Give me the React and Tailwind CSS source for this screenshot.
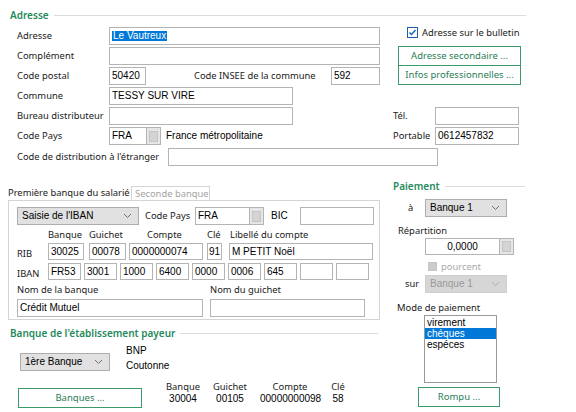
import React from 'react'

const label = "font-['Noto_Sans',sans-serif] text-[9.4px] text-[#1a1a1a] leading-none whitespace-nowrap"
const value = "font-['Liberation_Sans',Arial,sans-serif] text-[10px] text-black whitespace-nowrap"

function Field({ w, h = 18, children, center, className = '' }) {
  return (
    <div
      className={`shrink-0 border border-[#b4b4b4] bg-white flex items-center px-[2px] leading-none ${center ? 'justify-center' : ''} ${value} ${className}`}
      style={{ width: w, height: h }}
    >
      {children}
    </div>
  )
}

function DotsBtn({ h = 18 }) {
  return (
    <div className="shrink-0 w-[14px] border border-[#b4b4b4] border-l-0 bg-[#e6e6e6] flex items-center justify-center" style={{ height: h }}>
      <div className="w-[9px] h-[11px] bg-[#d4d4d4] border border-[#c4c4c4]" />
    </div>
  )
}

function Chevron({ color = '#707070' }) {
  return (
    <svg width="9" height="6" viewBox="0 0 9 6" className="shrink-0">
      <path d="M1 1l3.5 3.5L8 1" fill="none" stroke={color} strokeWidth="1" />
    </svg>
  )
}

function Select({ w, children, disabled }) {
  return (
    <div
      className={`shrink-0 h-[18px] border flex items-center justify-between pl-[4px] pr-[6px] ${disabled ? 'bg-[#d6d6d6] border-[#cfcfcf] text-[#9a9a9a]' : 'bg-[#e1e1e1] border-[#adadad] text-black'} font-['Liberation_Sans',Arial,sans-serif] text-[10px] leading-none whitespace-nowrap`}
      style={{ width: w }}
    >
      <span>{children}</span>
      <Chevron color={disabled ? '#b0b0b0' : '#707070'} />
    </div>
  )
}

function GreenBtn({ w, children, className = '' }) {
  return (
    <div
      className={`shrink-0 h-[20px] border border-[#3a9a6c] bg-white flex items-center justify-center text-[#2b7d57] font-['Noto_Sans',sans-serif] text-[9.5px] leading-none whitespace-nowrap ${className}`}
      style={{ width: w }}
    >
      {children}
    </div>
  )
}

function GroupHeader({ title, className = '' }) {
  return (
    <div className={`flex items-center h-[14px] ${className}`}>
      <span className="font-['Noto_Sans',sans-serif] text-[10px] font-semibold text-[#1f8a5c] leading-none whitespace-nowrap">{title}</span>
      <div className="flex-1 h-px bg-[#dcdcdc] ml-[5px]" />
    </div>
  )
}

function Row({ children, className = '' }) {
  return <div className={`flex items-center h-[18px] ${className}`}>{children}</div>
}

export default function App() {
  return (
    <div className="w-[576px] h-[412px] bg-white overflow-hidden">
      {/* Adresse */}
      <GroupHeader title="Adresse" className="mt-[8px] ml-[10px] w-[516px]" />

      <div className="flex mt-[5px]">
        <div className="ml-[17px] w-[363px] flex flex-col gap-[2px]">
          <Row>
            <span className={`${label} w-[92px]`}>Adresse</span>
            <Field w={271}>
              <span className="bg-[#0078d7] text-white px-px">Le Vautreux</span>
            </Field>
          </Row>
          <Row>
            <span className={`${label} w-[92px]`}>Complément</span>
            <Field w={271} />
          </Row>
          <Row>
            <span className={`${label} w-[92px]`}>Code postal</span>
            <Field w={37}>50420</Field>
            <span className={`${label} w-[137px] ml-[48px]`}>Code INSEE de la commune</span>
            <Field w={49}>592</Field>
          </Row>
          <Row>
            <span className={`${label} w-[92px]`}>Commune</span>
            <Field w={184}>TESSY SUR VIRE</Field>
          </Row>
          <Row>
            <span className={`${label} w-[92px]`}>Bureau distributeur</span>
            <Field w={184} />
          </Row>
          <Row>
            <span className={`${label} w-[92px]`}>Code Pays</span>
            <Field w={38}>FRA</Field>
            <DotsBtn />
            <span className={`${value} leading-none ml-[5px]`}>France métropolitaine</span>
          </Row>
        </div>

        <div className="ml-[13px] w-[128px] flex flex-col">
          <div className="flex items-center h-[11px] ml-[14px]">
            <div className="w-[11px] h-[11px] border border-[#1f5fa8] bg-white flex items-center justify-center">
              <svg width="9" height="9" viewBox="0 0 9 9">
                <path d="M1.5 4.5l2 2L7.5 2" fill="none" stroke="#0067c0" strokeWidth="1.4" />
              </svg>
            </div>
            <span className={`${label} ml-[4px]`}>Adresse sur le bulletin</span>
          </div>
          <GreenBtn w={123} className="ml-[5px] mt-[8px]">Adresse secondaire ...</GreenBtn>
          <GreenBtn w={123} className="ml-[5px] -mt-px">Infos professionnelles ...</GreenBtn>
          <Row className="mt-[22px]">
            <span className={`${label} w-[42px]`}>Tél.</span>
            <Field w={84} />
          </Row>
          <Row className="mt-[2px]">
            <span className={`${label} w-[42px]`}>Portable</span>
            <Field w={84}>0612457832</Field>
          </Row>
        </div>
      </div>

      <Row className="ml-[17px] mt-[3px]">
        <span className={`${label} w-[151px]`}>Code de distribution à l'étranger</span>
        <Field w={270} />
      </Row>

      {/* bottom area */}
      <div className="flex mt-[13px]">
        <div className="ml-[8px] w-[372px] flex flex-col">
          {/* tabs */}
          <div className="flex items-end h-[14px] mt-[7px]">
            <div className={`${label} h-[14px] flex items-center w-[122px]`}>Première banque du salarié</div>
            <div className="h-[14px] flex items-center px-[3px] ml-[1px] border border-b-0 border-[#d4d4d4] font-['Noto_Sans',sans-serif] text-[9.4px] text-[#a3a3a3] leading-none whitespace-nowrap w-[79px]">
              Seconde banque
            </div>
          </div>
          <div className="border border-[#d4d4d4] h-[120px] pl-[8px] pt-[6px] flex flex-col">
            <Row>
              <Select w={122}>Saisie de l'IBAN</Select>
              <span className={`${label} ml-[6px] w-[50px]`}>Code Pays</span>
              <Field w={55}>FRA</Field>
              <DotsBtn />
              <span className={`${value} leading-none ml-[7px] w-[29px]`}>BIC</span>
              <Field w={74} />
            </Row>
            <div className={`flex items-center h-[12px] mt-[4px] ${label}`}>
              <span className="ml-[31px] w-[41px]">Banque</span>
              <span className="w-[58px]">Guichet</span>
              <span className="w-[60px]">Compte</span>
              <span className="w-[23px]">Clé</span>
              <span>Libellé du compte</span>
            </div>
            <div className="flex items-end h-[17px] mt-[2px]">
              <span className={`${label} w-[31px] mb-[2px]`}>RIB</span>
              <Field w={36} h={17}>30025</Field>
              <Field w={37} h={17} className="ml-[5px]">00078</Field>
              <Field w={74} h={17} className="ml-[3px]">0000000074</Field>
              <Field w={15} h={17} className="ml-[4px]" center>91</Field>
              <Field w={144} h={17} className="ml-[7px]">M PETIT Noël</Field>
            </div>
            <div className="flex items-end h-[17px] mt-[3px] gap-[3px]">
              <span className={`${label} w-[28px] mb-[2px]`}>IBAN</span>
              <Field w={33} h={17}>FR53</Field>
              <Field w={33} h={17}>3001</Field>
              <Field w={33} h={17}>1000</Field>
              <Field w={33} h={17}>6400</Field>
              <Field w={33} h={17}>0000</Field>
              <Field w={33} h={17}>0006</Field>
              <Field w={33} h={17}>645</Field>
              <Field w={33} h={17} />
              <Field w={33} h={17} />
            </div>
            <div className={`flex items-center h-[12px] mt-[4px] ${label}`}>
              <span className="w-[193px]">Nom de la banque</span>
              <span>Nom du guichet</span>
            </div>
            <div className="flex items-center mt-[3px]">
              <Field w={186}>Crédit Mutuel</Field>
              <Field w={155} className="ml-[7px]" />
            </div>
          </div>

          <GroupHeader title="Banque de l'établissement payeur" className="mt-[6px] ml-[2px] w-[368px]" />

          <div className="flex mt-[3px] ml-[12px]">
            <div className="mt-[10px]">
              <Select w={90}>1ère Banque</Select>
            </div>
            <div className={`${value} leading-[15px] ml-[16px]`}>
              <div>BNP</div>
              <div>Coutonne</div>
            </div>
          </div>

          <div className="flex mt-[9px] ml-[10px]">
            <GreenBtn w={124} className="mt-[6px]">Banques ...</GreenBtn>
            <div className="flex ml-[23px] text-center">
              <div className="w-[36px]">
                <div className={label}>Banque</div>
                <div className={`${value} leading-none mt-[3px]`}>30004</div>
              </div>
              <div className="w-[36px] ml-[11px]">
                <div className={label}>Guichet</div>
                <div className={`${value} leading-none mt-[3px]`}>00105</div>
              </div>
              <div className="w-[60px] ml-[12px]">
                <div className={label}>Compte</div>
                <div className={`${value} leading-none mt-[3px]`}>00000000098</div>
              </div>
              <div className="w-[14px] ml-[11px]">
                <div className={label}>Clé</div>
                <div className={`${value} leading-none mt-[3px]`}>58</div>
              </div>
            </div>
          </div>
        </div>

        {/* Paiement */}
        <div className="ml-[13px] w-[132px] flex flex-col">
          <GroupHeader title="Paiement" />
          <div className="flex items-center h-[18px] mt-[6px]">
            <span className={`${label} w-[32px] pl-[15px]`}>à</span>
            <Select w={82}>Banque 1</Select>
          </div>
          <div className={`${label} ml-[5px] mt-[8px] h-[12px] flex items-center`}>Répartition</div>
          <div className="flex items-center ml-[32px] mt-[1px]">
            <Field w={75} h={17} center>0,0000</Field>
            <DotsBtn h={17} />
          </div>
          <div className="flex items-center ml-[35px] mt-[7px] h-[9px]">
            <div className="w-[9px] h-[9px] bg-[#cccccc] border border-[#c4c4c4]" />
            <span className="ml-[4px] font-['Noto_Sans',sans-serif] text-[9.4px] text-[#a8a8a8] leading-none">pourcent</span>
          </div>
          <div className="flex items-center h-[18px] mt-[4px]">
            <span className={`${label} w-[32px] pl-[12px]`}>sur</span>
            <Select w={82} disabled>Banque 1</Select>
          </div>
          <div className={`${label} ml-[4px] mt-[9px] h-[12px] flex items-center`}>Mode de paiement</div>
          <div className={`ml-[31px] mt-[1px] w-[73px] h-[68px] border border-[#9a9a9a] bg-white py-[1px] leading-none ${value}`}>
            <div className="h-[11px] px-[2px] flex items-center">virement</div>
            <div className="h-[11px] px-[2px] flex items-center bg-[#0078d7] text-white">chéques</div>
            <div className="h-[11px] px-[2px] flex items-center">espéces</div>
          </div>
          <GreenBtn w={82} className="ml-[25px] mt-[4px]">Rompu ...</GreenBtn>
        </div>
      </div>
    </div>
  )
}
